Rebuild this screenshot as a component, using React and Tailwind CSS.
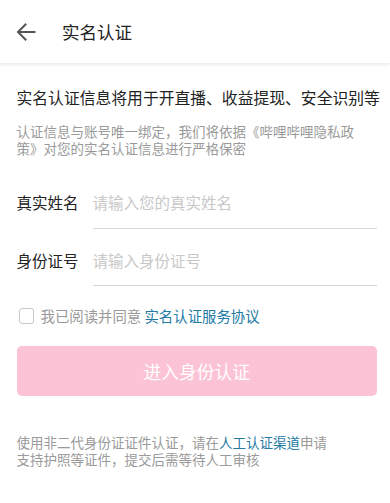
import React from "react";

export default function App() {
  const font = { fontFamily: '"Noto Sans CJK SC", "Noto Sans", sans-serif' };
  return (
    <div className="w-[390px] h-[503px] bg-white overflow-hidden" style={font}>
      <div className="h-[63px] flex items-center bg-white shadow-[0_2px_3px_rgba(0,0,0,0.08)] relative">
        <div className="pl-[16px] flex items-center">
          <svg width="20" height="20" viewBox="0 0 20 20" fill="none">
            <path d="M18.5 10H2.5M9.5 2.5L2 10L9.5 17.5" stroke="#555" strokeWidth="2" strokeLinecap="square" />
          </svg>
        </div>
        <div className="ml-[26px] mt-[1px] text-[17.5px] text-[#222] leading-none">实名认证</div>
      </div>

      <div className="pl-[16.5px] pr-[13px]">
        <div className="mt-[23px] text-[15.8px] leading-[24px] text-[#222] whitespace-nowrap">
          实名认证信息将用于开直播、收益提现、安全识别等
        </div>
        <div className="mt-[13px] text-[13.5px] leading-[17px] text-[#9a9a9a] whitespace-nowrap">
          认证信息与账号唯一绑定，我们将依据《哔哩哔哩隐私政
          <br />
          策》对您的实名认证信息进行严格保密
        </div>

        <div className="mt-[21px] flex">
          <div className="w-[76px] h-[50px] flex items-center text-[15.5px] text-[#222]">真实姓名</div>
          <div className="flex-1 h-[51px] flex items-center border-b border-[#d6d6d6] text-[15.5px] text-[#c8c8c8]">
            请输入您的真实姓名
          </div>
        </div>
        <div className="mt-[7px] flex">
          <div className="w-[76px] h-[50px] flex items-center text-[15.5px] text-[#222]">身份证号</div>
          <div className="flex-1 h-[50px] flex items-center border-b border-[#d6d6d6] text-[15.5px] text-[#c8c8c8]">
            请输入身份证号
          </div>
        </div>

        <div className="mt-[21px] flex items-center h-[18px]">
          <div className="ml-[2px] w-[15px] h-[16px] rounded-[3px] border border-[#c8c8c8]"></div>
          <div className="ml-[7px] text-[14.4px] leading-none text-[#999]">
            我已阅读并同意 <span className="text-[#2279a3]">实名认证服务协议</span>
          </div>
        </div>

        <div className="mt-[21px] h-[50px] rounded-[5px] bg-[#fcc2d5] flex items-center justify-center text-white text-[17.8px]">
          进入身份认证
        </div>

        <div className="mt-[38px] text-[13.5px] leading-[17px] text-[#9a9a9a] whitespace-nowrap">
          使用非二代身份证证件认证，请在<span className="text-[#2279a3]">人工认证渠道</span>申请
          <br />
          支持护照等证件，提交后需等待人工审核
        </div>
      </div>
    </div>
  );
}
